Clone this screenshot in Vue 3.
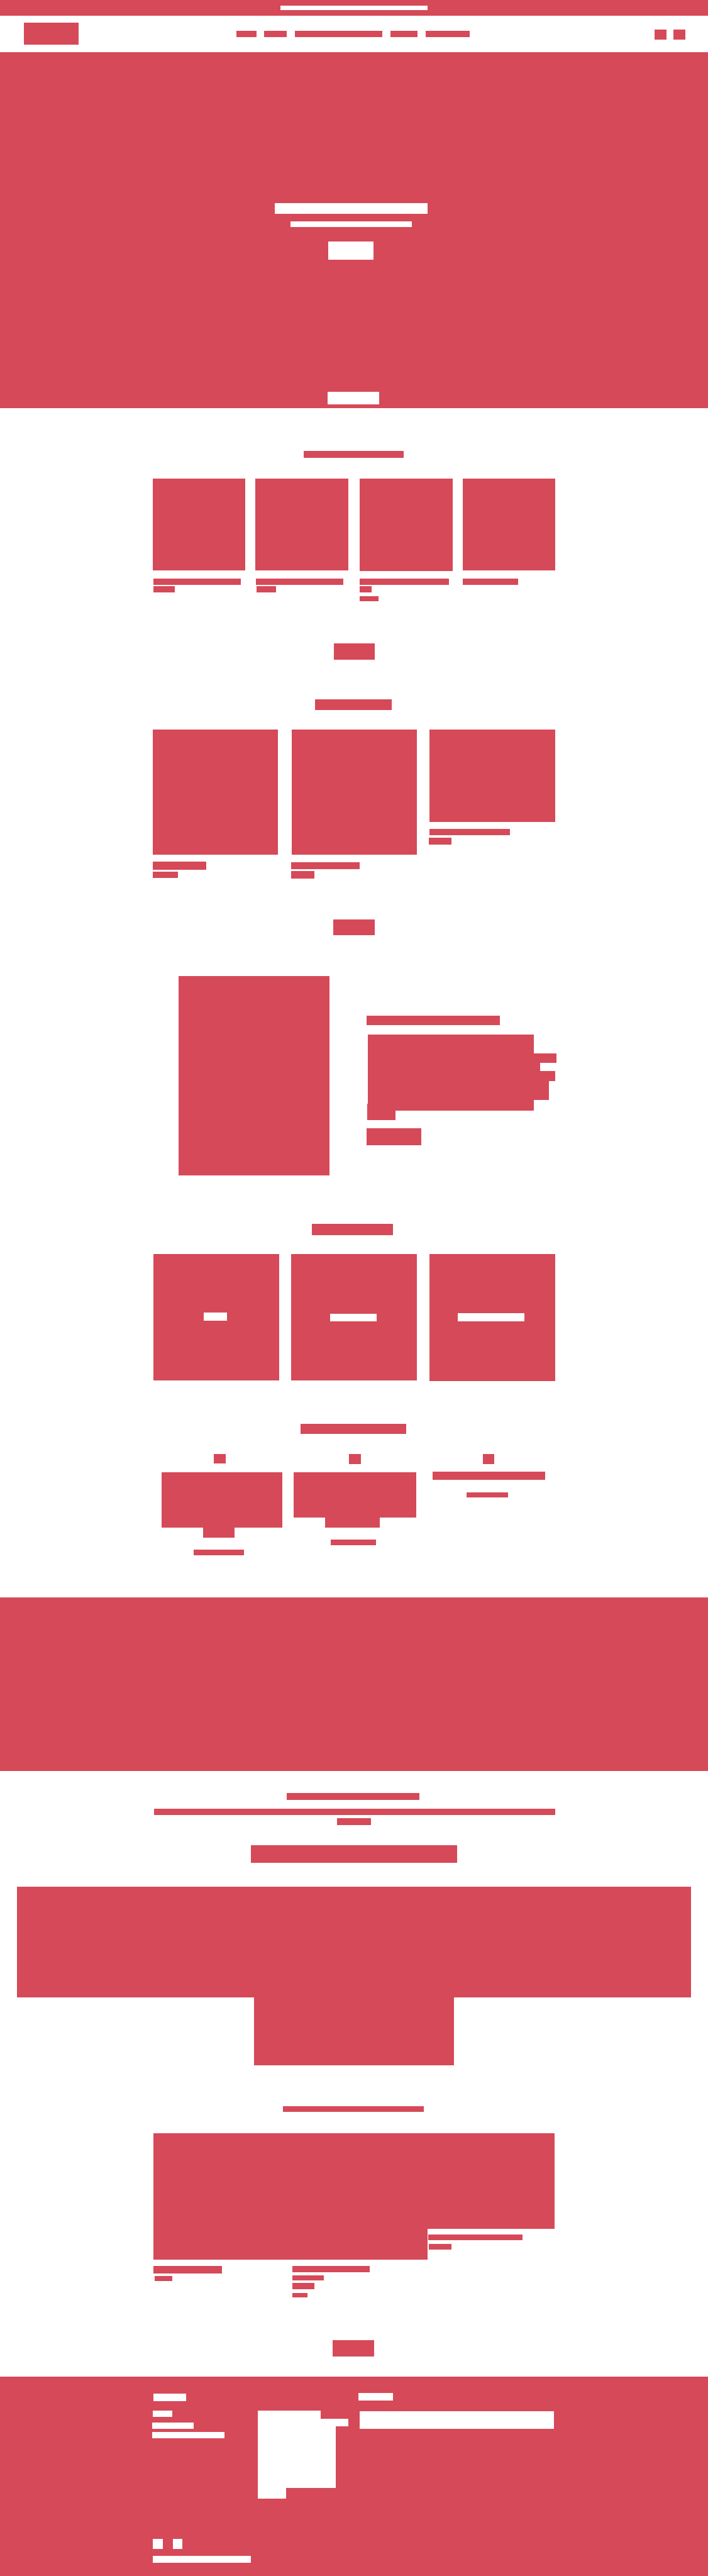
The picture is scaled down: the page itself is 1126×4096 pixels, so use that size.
<script setup>
// Every bar is [indent, space above, width, height] inside its column.
const bar = ([indent, above, width, height]) => ({
  marginLeft: `${indent}px`,
  marginTop: `${above}px`,
  width: `${width}px`,
  height: `${height}px`,
})

const nav = [[0, 0, 32, 10], [12, 0, 36, 10], [13, 0, 139, 10], [13, 0, 43, 10], [13, 0, 70, 10]]
const heroBars = [[437, 240, 243, 17], [462, 12, 193, 9], [522, 23, 72, 29], [521, 210, 82, 20]]

const collections = [
  [[0, 0, 147, 146], [1, 13, 139, 10], [1, 2, 34, 10]],
  [[0, 0, 148, 146], [1, 13, 139, 10], [2, 2, 31, 10]],
  [[0, 0, 148, 147], [0, 12, 142, 10], [0, 2, 19, 10], [0, 6, 30, 8]],
  [[0, 0, 147, 146], [0, 13, 88, 10]],
]

const arrivals = [
  [[0, 0, 199, 199], [0, 11, 85, 13], [0, 3, 40, 10]],
  [[1, 0, 199, 199], [0, 12, 109, 11], [0, 3, 37, 12]],
  [[1, 0, 200, 147], [1, 11, 128, 10], [0, 4, 36, 11]],
]

const story = [
  [0, 0, 212, 15],
  [2, 15, 264, 30],
  [2, 0, 300, 15],
  [2, 0, 274, 13],
  [2, 0, 298, 16],
  [2, 0, 288, 30],
  [2, 0, 264, 6],
  [1, 0, 265, 11],
  [1, 0, 45, 15],
  [0, 13, 87, 27],
]

const categories = [
  { card: [0, 0, 200, 201], label: [80, 93, 37, 13] },
  { card: [19, 0, 200, 201], label: [62, 95, 74, 12] },
  { card: [20, 0, 200, 202], label: [45, 94, 106, 13] },
]

const reviews = [
  [[83, 0, 19, 15], [0, 14, 192, 88], [66, 0, 50, 16], [51, 19, 80, 9]],
  [[88, 0, 19, 16], [0, 13, 195, 72], [50, 0, 87, 16], [59, 19, 72, 9]],
  [[80, 0, 18, 16], [0, 12, 179, 13], [54, 20, 66, 8]],
]

const newsletter = [
  [456, 35, 211, 11],
  [245, 14, 638, 10],
  [536, 5, 54, 11],
  [399, 32, 328, 28],
  [27, 38, 1072, 176],
  [404, 0, 318, 108],
]

const sellers = [
  [[0, 0, 221, 201], [0, 10, 109, 12], [2, 4, 28, 8]],
  [[0, 0, 215, 201], [0, 10, 123, 10], [0, 5, 50, 8], [0, 4, 35, 10], [0, 6, 24, 7]],
  [[0, 0, 202, 152], [1, 9, 150, 9], [2, 6, 36, 9]],
]

const footer = [
  [[2, 27, 52, 12], [1, 15, 31, 10], [0, 9, 66, 10], [0, 5, 115, 10]],
  [[0, 54, 100, 13], [0, 0, 144, 12], [0, 0, 124, 98], [0, 0, 45, 17]],
  [[0, 26, 55, 12], [2, 17, 309, 28]],
]
const social = [[0, 0, 16, 16], [16, 0, 15, 16]]
</script>

<template>
  <div class="page">
    <div class="announcement"><div class="message"></div></div>

    <header class="header">
      <div class="logo"></div>
      <nav class="nav">
        <div v-for="(b, i) in nav" :key="i" class="bar" :style="bar(b)"></div>
      </nav>
      <div class="actions"><div class="action"></div><div class="action"></div></div>
    </header>

    <section class="hero">
      <div v-for="(b, i) in heroBars" :key="i" class="bar light" :style="bar(b)"></div>
    </section>

    <section class="section collections">
      <div class="bar title"></div>
      <div class="columns">
        <div v-for="(col, c) in collections" :key="c" class="column">
          <div v-for="(b, i) in col" :key="i" class="bar" :style="bar(b)"></div>
        </div>
      </div>
      <div class="bar button"></div>
    </section>

    <section class="section arrivals">
      <div class="bar title"></div>
      <div class="columns">
        <div v-for="(col, c) in arrivals" :key="c" class="column">
          <div v-for="(b, i) in col" :key="i" class="bar" :style="bar(b)"></div>
        </div>
      </div>
      <div class="bar button"></div>
    </section>

    <section class="section story">
      <div class="bar portrait"></div>
      <div class="copy">
        <div v-for="(b, i) in story" :key="i" class="bar" :style="bar(b)"></div>
      </div>
    </section>

    <section class="section categories">
      <div class="bar title"></div>
      <div class="columns">
        <div v-for="(item, c) in categories" :key="c" class="bar card" :style="bar(item.card)">
          <div class="bar light" :style="bar(item.label)"></div>
        </div>
      </div>
    </section>

    <section class="section reviews">
      <div class="bar title"></div>
      <div class="columns">
        <div v-for="(col, c) in reviews" :key="c" class="column">
          <div v-for="(b, i) in col" :key="i" class="bar" :style="bar(b)"></div>
        </div>
      </div>
    </section>

    <section class="banner"></section>

    <section class="section newsletter">
      <div v-for="(b, i) in newsletter" :key="i" class="bar" :style="bar(b)"></div>
    </section>

    <section class="section sellers">
      <div class="bar title"></div>
      <div class="columns">
        <div v-for="(col, c) in sellers" :key="c" class="column">
          <div v-for="(b, i) in col" :key="i" class="bar" :style="bar(b)"></div>
        </div>
      </div>
      <div class="bar button"></div>
    </section>

    <footer class="footer">
      <div class="columns">
        <div v-for="(col, c) in footer" :key="c" class="column">
          <div v-for="(b, i) in col" :key="i" class="bar light" :style="bar(b)"></div>
        </div>
      </div>
      <div class="social">
        <div v-for="(b, i) in social" :key="i" class="bar light" :style="bar(b)"></div>
      </div>
      <div class="copyright"></div>
    </footer>
  </div>
</template>

<style>
body {
  margin: 0;
  background: #fff;
}
</style>

<style scoped>
.page {
  --red: #d64958;
  width: 1126px;
  height: 4096px;
  overflow: hidden;
  background: #fff;
  font-family: "Liberation Sans", sans-serif;
}

.page div,
.page section {
  box-sizing: border-box;
}

.bar {
  flex: none;
  background: var(--red);
}

.light {
  background: #fff;
}

.announcement {
  display: flow-root;
  height: 25px;
  background: var(--red);
}

.message {
  width: 234px;
  height: 7px;
  margin: 9px 0 0 446px;
  background: #fff;
}

.header {
  display: flex;
  height: 58px;
}

.logo {
  width: 87px;
  height: 35px;
  margin: 11px 0 0 38px;
  background: var(--red);
}

.nav {
  display: flex;
  width: 371px;
  margin: 24px 0 0 251px;
}

.actions {
  display: flex;
  gap: 11px;
  margin: 22px 0 0 294px;
}

.action {
  width: 19px;
  height: 16px;
  background: var(--red);
}

.hero {
  display: flow-root;
  height: 566px;
  background: var(--red);
}

.section {
  display: flow-root;
}

.columns {
  display: grid;
}

.column {
  display: flow-root;
}

/* Collections */
.collections {
  height: 421px;
}

.collections .title {
  width: 159px;
  height: 11px;
  margin: 68px 0 0 483px;
}

.collections .columns {
  grid-template-columns: 163px 166px 164px 147px;
  height: 195px;
  margin: 33px 0 0 243px;
}

.collections .button {
  width: 65px;
  height: 26px;
  margin: 67px 0 0 531px;
}

/* New arrivals */
.arrivals {
  height: 445px;
}

.arrivals .title {
  width: 122px;
  height: 17px;
  margin: 42px 0 0 501px;
}

.arrivals .columns {
  grid-template-columns: 220px 219px 201px;
  height: 237px;
  margin: 31px 0 0 243px;
}

.arrivals .button {
  width: 66px;
  height: 25px;
  margin: 65px 0 0 530px;
}

/* Story */
.story {
  display: flex;
  align-items: flex-start;
  height: 390px;
}

.portrait {
  width: 240px;
  height: 317px;
  margin: 37px 0 0 284px;
}

.copy {
  display: flow-root;
  margin: 100px 0 0 59px;
}

/* Categories */
.categories {
  height: 325px;
}

.categories .title {
  width: 129px;
  height: 18px;
  margin: 41px 0 0 496px;
}

.categories .columns {
  display: flex;
  align-items: flex-start;
  margin: 30px 0 0 244px;
}

.card {
  display: flow-root;
}

/* Reviews */
.reviews {
  height: 310px;
}

.reviews .title {
  width: 168px;
  height: 16px;
  margin: 34px 0 0 478px;
}

.reviews .columns {
  grid-template-columns: 210px 221px 180px;
  margin: 32px 0 0 257px;
}

.banner {
  height: 276px;
  background: var(--red);
}

.newsletter {
  height: 494px;
}

/* Best sellers */
.sellers {
  height: 469px;
}

.sellers .title {
  width: 224px;
  height: 9px;
  margin: 39px 0 0 450px;
}

.sellers .columns {
  grid-template-columns: 221px 215px 202px;
  height: 262px;
  margin: 34px 0 0 244px;
}

.sellers .button {
  width: 66px;
  height: 26px;
  margin: 67px 0 0 529px;
}

/* Footer */
.footer {
  display: flow-root;
  height: 317px;
  background: var(--red);
}

.footer .columns {
  grid-template-columns: 168px 160px 311px;
  height: 258px;
  margin-left: 242px;
}

.social {
  display: flex;
  margin-left: 243px;
}

.copyright {
  width: 156px;
  height: 11px;
  margin: 11px 0 0 243px;
  background: #fff;
}
</style>
